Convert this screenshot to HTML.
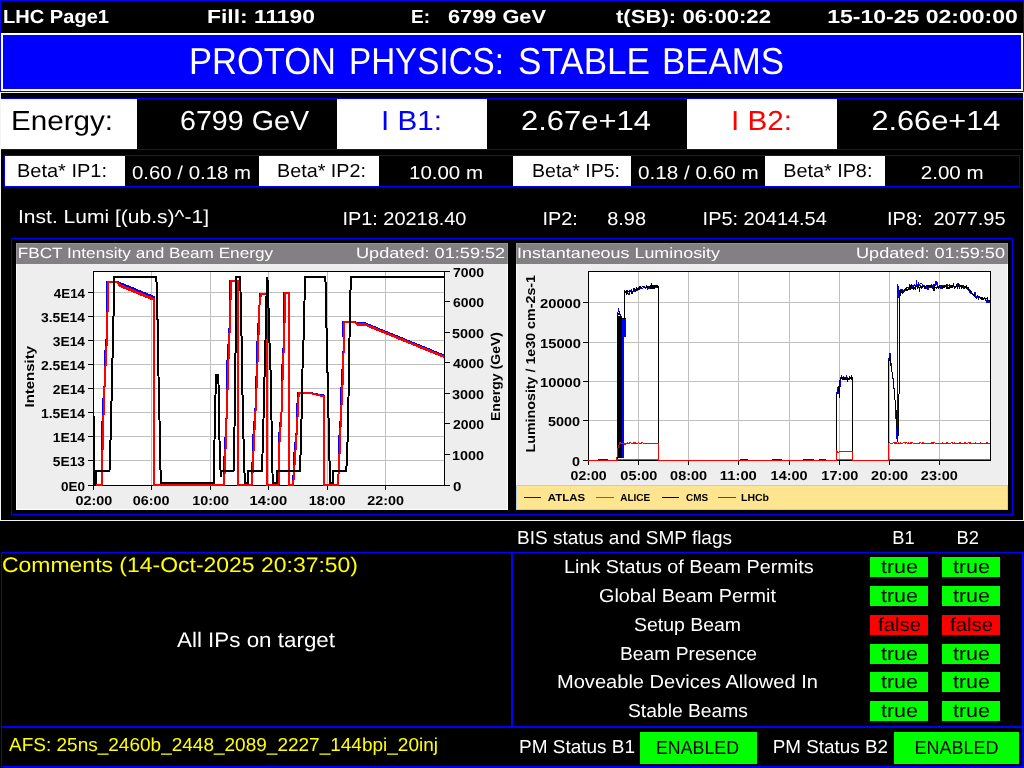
<!DOCTYPE html>
<html><head><meta charset="utf-8"><title>LHC Page1</title>
<style>html,body{margin:0;padding:0;background:#000;width:1024px;height:768px;overflow:hidden;font-family:"Liberation Sans",sans-serif}</style></head>
<body>
<svg width="1024" height="768" viewBox="0 0 1024 768" style="position:absolute;left:0;top:0;display:block">
<filter id="gs" filterUnits="userSpaceOnUse" x="0" y="0" width="1024" height="768"><feOffset dx="0" dy="0"/></filter>
<g shape-rendering="crispEdges">
<rect x="0" y="0" width="1024" height="768" fill="#000"/>
<rect x="0" y="0" width="1024" height="1" fill="#0000ff"/>
<rect x="0" y="91" width="1024" height="1" fill="#0000ff"/>
<rect x="0" y="0" width="1" height="92" fill="#0000ff"/>
<rect x="1023" y="0" width="1" height="92" fill="#0000ff"/>
<rect x="1" y="33" width="1022" height="58" fill="#fff"/>
<rect x="3" y="35" width="1018" height="54" fill="#0000ff"/>
<rect x="0" y="92" width="1024" height="1" fill="#f4f4f4"/>
<rect x="0" y="92" width="1" height="429" fill="#f4f4f4"/>
<rect x="1023" y="92" width="1" height="429" fill="#f4f4f4"/>
<rect x="0" y="520" width="1024" height="1" fill="#f0f0f0"/>
<rect x="1" y="98" width="1022" height="1" fill="#0000ff"/>
<rect x="1" y="149" width="1022" height="1" fill="#0000ff"/>
<rect x="1" y="99" width="136" height="50" fill="#fff"/>
<rect x="337" y="99" width="150" height="50" fill="#fff"/>
<rect x="687" y="99" width="150" height="50" fill="#fff"/>
<rect x="4" y="155" width="1016" height="1" fill="#0000ff"/>
<rect x="4" y="186" width="1016" height="1" fill="#0000ff"/>
<rect x="4" y="155" width="1" height="32" fill="#0000ff"/>
<rect x="1019" y="155" width="1" height="32" fill="#0000ff"/>
<rect x="5" y="156" width="120" height="30" fill="#fff"/>
<rect x="259" y="156" width="120" height="30" fill="#fff"/>
<rect x="513" y="156" width="118" height="30" fill="#fff"/>
<rect x="765" y="156" width="120" height="30" fill="#fff"/>
<rect x="11" y="238" width="1002" height="1" fill="#0000ff"/>
<rect x="11" y="514" width="1002" height="1" fill="#0000ff"/>
<rect x="11" y="238" width="1" height="277" fill="#0000ff"/>
<rect x="1012" y="238" width="1" height="277" fill="#0000ff"/>
<rect x="16" y="243" width="492" height="267" fill="#ffffff"/>
<rect x="17" y="243" width="490" height="266" fill="#eeeeee"/>
<rect x="16" y="243" width="492" height="21" fill="#959395"/>
<rect x="17" y="244" width="490" height="20" fill="#828082"/>
<rect x="516" y="243" width="492" height="267" fill="#ffffff"/>
<rect x="517" y="243" width="490" height="266" fill="#eeeeee"/>
<rect x="516" y="243" width="492" height="21" fill="#959395"/>
<rect x="517" y="244" width="490" height="20" fill="#828082"/>
<rect x="1" y="552" width="511" height="1" fill="#0000ff"/>
<rect x="1" y="726" width="511" height="1" fill="#0000ff"/>
<rect x="1" y="552" width="1" height="175" fill="#0000ff"/>
<rect x="511" y="552" width="1" height="175" fill="#0000ff"/>
<rect x="512" y="552" width="511" height="1" fill="#0000ff"/>
<rect x="512" y="726" width="511" height="1" fill="#0000ff"/>
<rect x="512" y="552" width="1" height="175" fill="#0000ff"/>
<rect x="1022" y="552" width="1" height="175" fill="#0000ff"/>
<rect x="1" y="727" width="1022" height="1" fill="#0000ff"/>
<rect x="1" y="766" width="1022" height="1" fill="#0000ff"/>
<rect x="1" y="727" width="1" height="40" fill="#0000ff"/>
<rect x="1022" y="727" width="1" height="40" fill="#0000ff"/>
<rect x="870" y="557" width="58" height="20" fill="#00ff00"/>
<rect x="942" y="557" width="58" height="20" fill="#00ff00"/>
<rect x="870" y="586" width="58" height="20" fill="#00ff00"/>
<rect x="942" y="586" width="58" height="20" fill="#00ff00"/>
<rect x="870" y="615" width="58" height="20" fill="#ff0000"/>
<rect x="942" y="615" width="58" height="20" fill="#ff0000"/>
<rect x="870" y="644" width="58" height="20" fill="#00ff00"/>
<rect x="942" y="644" width="58" height="20" fill="#00ff00"/>
<rect x="870" y="672" width="58" height="20" fill="#00ff00"/>
<rect x="942" y="672" width="58" height="20" fill="#00ff00"/>
<rect x="870" y="701" width="58" height="20" fill="#00ff00"/>
<rect x="942" y="701" width="58" height="20" fill="#00ff00"/>
<rect x="640" y="732" width="117" height="32" fill="#00ff00"/>
<rect x="894" y="732" width="125" height="32" fill="#00ff00"/>
<rect x="93" y="271" width="352" height="215" fill="#fff"/>
<rect x="151" y="271" width="1" height="215" fill="#c0c0c0"/>
<rect x="210" y="271" width="1" height="215" fill="#c0c0c0"/>
<rect x="268" y="271" width="1" height="215" fill="#c0c0c0"/>
<rect x="327" y="271" width="1" height="215" fill="#c0c0c0"/>
<rect x="385" y="271" width="1" height="215" fill="#c0c0c0"/>
<rect x="93" y="460" width="352" height="1" fill="#c0c0c0"/>
<rect x="93" y="436" width="352" height="1" fill="#c0c0c0"/>
<rect x="93" y="412" width="352" height="1" fill="#c0c0c0"/>
<rect x="93" y="388" width="352" height="1" fill="#c0c0c0"/>
<rect x="93" y="364" width="352" height="1" fill="#c0c0c0"/>
<rect x="93" y="340" width="352" height="1" fill="#c0c0c0"/>
<rect x="93" y="316" width="352" height="1" fill="#c0c0c0"/>
<rect x="93" y="292" width="352" height="1" fill="#c0c0c0"/>
<rect x="588" y="271" width="403" height="190" fill="#fff"/>
<rect x="638" y="271" width="1" height="190" fill="#c0c0c0"/>
<rect x="688" y="271" width="1" height="190" fill="#c0c0c0"/>
<rect x="738" y="271" width="1" height="190" fill="#c0c0c0"/>
<rect x="789" y="271" width="1" height="190" fill="#c0c0c0"/>
<rect x="839" y="271" width="1" height="190" fill="#c0c0c0"/>
<rect x="889" y="271" width="1" height="190" fill="#c0c0c0"/>
<rect x="939" y="271" width="1" height="190" fill="#c0c0c0"/>
<rect x="588" y="420" width="403" height="1" fill="#c0c0c0"/>
<rect x="588" y="381" width="403" height="1" fill="#c0c0c0"/>
<rect x="588" y="342" width="403" height="1" fill="#c0c0c0"/>
<rect x="588" y="302" width="403" height="1" fill="#c0c0c0"/>
<rect x="516" y="485" width="492" height="25" fill="#b8cfe5"/>
<rect x="517" y="486" width="490" height="23" fill="#ffe58f"/>
<rect x="93.5" y="271.5" width="351" height="214" fill="none" stroke="#000" stroke-width="1"/>
<clipPath id="cl"><rect x="93" y="271" width="352" height="215"/></clipPath>
<g clip-path="url(#cl)">
<polyline points="94.0,485.0 101.5,485.0 102.7,408.6 104.6,385.0 105.0,356.0 107.2,332.0 107.0,282.0 117.5,282.0 120.0,283.0 154.0,297.0 154.0,485.0 223.8,485.0 223.8,470.0 226.7,414.0 227.5,360.0 230.0,320.0 230.0,281.0 238.4,281.0 238.4,485.0 252.0,485.0 253.0,440.0 256.0,402.0 257.0,350.0 259.5,305.0 260.0,293.5 267.0,293.5 267.0,485.0 278.5,485.0 278.5,442.0 281.5,412.0 281.5,381.0 284.0,340.0 284.4,292.5 289.2,292.5 289.2,485.0 293.2,485.0 294.2,455.0 297.0,428.0 297.7,393.0 309.8,393.0 324.0,395.5 324.0,485.0 337.7,485.0 339.0,467.0 339.0,442.0 341.0,414.0 341.4,389.0 343.6,350.0 343.4,322.0 354.5,322.0 357.0,323.0 365.5,323.5 444.0,355.5" fill="none" stroke="#0000ff" stroke-width="2" stroke-linejoin="miter"/>
<polyline points="94.0,485.0 101.5,485.0 103.7,408.6 104.6,385.0 106.0,356.0 107.2,332.0 108.0,282.0 117.5,282.0 120.0,286.0 154.0,300.0 154.0,485.0 223.8,485.0 224.8,470.0 226.7,414.0 228.5,360.0 230.0,320.0 231.0,281.0 238.4,281.0 238.4,485.0 252.0,485.0 254.0,440.0 256.0,402.0 258.0,350.0 259.5,305.0 261.0,293.5 267.0,293.5 267.0,485.0 278.5,485.0 279.5,442.0 281.5,412.0 282.5,381.0 284.0,340.0 285.4,292.5 289.2,292.5 289.2,485.0 293.2,485.0 295.2,455.0 297.0,428.0 298.7,393.0 309.8,393.0 324.0,396.5 324.0,485.0 337.7,485.0 339.0,467.0 340.0,442.0 341.0,414.0 342.4,389.0 343.6,350.0 344.4,322.0 354.5,322.0 357.0,324.5 365.5,325.0 444.0,357.0" fill="none" stroke="#ff0000" stroke-width="2" stroke-linejoin="miter"/>
<polyline points="94.0,485.0 101.5,485.0 103.7,408.6 104.6,385.0 106.0,356.0 107.2,332.0 108.0,282.0 117.5,282.0 120.0,285.0 154.0,299.0 154.0,485.0 223.8,485.0 224.8,470.0 226.7,414.0 228.5,360.0 230.0,320.0 231.0,281.0 238.4,281.0 238.4,485.0 252.0,485.0 254.0,440.0 256.0,402.0 258.0,350.0 259.5,305.0 261.0,293.5 267.0,293.5 267.0,485.0 278.5,485.0 279.5,442.0 281.5,412.0 282.5,381.0 284.0,340.0 285.4,292.5 289.2,292.5 289.2,485.0 293.2,485.0 295.2,455.0 297.0,428.0 298.7,393.0 309.8,393.0 324.0,396.5 324.0,485.0 337.7,485.0 339.0,467.0 340.0,442.0 341.0,414.0 342.4,389.0 343.6,350.0 344.4,322.0 354.5,322.0 357.0,324.0 365.5,324.5 444.0,356.5" fill="none" stroke="#ff0000" stroke-width="2" stroke-linejoin="miter"/>
<polyline points="94.0,416.0 94.5,485.0 95.5,485.0 96.0,471.0 109.5,471.0 110.0,458.0 111.0,423.0 112.0,380.0 113.0,337.0 114.0,296.0 114.0,277.0 156.0,277.0 157.0,286.5 157.7,331.4 158.5,376.4 159.5,420.0 160.5,470.0 161.3,483.0 214.0,483.0 214.5,440.0 215.5,395.0 215.8,374.5 218.4,374.5 219.0,423.0 220.3,467.0 221.0,477.0 221.5,471.0 233.5,471.0 234.3,440.0 235.0,395.0 235.8,330.0 236.5,277.0 240.0,277.0 240.8,300.0 241.6,340.0 242.3,385.0 243.3,430.0 244.3,470.0 245.3,483.0 247.8,483.0 247.8,471.0 261.9,471.0 263.0,440.0 264.4,381.0 265.5,340.0 266.3,300.0 267.4,277.0 268.3,300.0 269.2,335.0 270.7,375.0 271.5,420.0 272.7,483.0 276.6,483.0 277.2,471.0 300.0,471.0 301.4,428.0 302.0,383.0 303.4,344.0 304.5,301.0 305.3,277.0 325.4,277.0 326.4,322.6 327.4,367.5 328.4,412.5 329.3,455.0 330.3,483.0 332.7,483.0 333.2,471.0 346.0,471.0 347.0,461.0 348.0,424.0 348.8,381.0 349.5,338.0 350.2,295.0 351.4,277.0 444.0,277.0" fill="none" stroke="#000" stroke-width="2" stroke-linejoin="miter"/>
</g>
<rect x="88" y="485" width="5" height="1" fill="#000"/>
<rect x="88" y="460" width="5" height="1" fill="#000"/>
<rect x="88" y="436" width="5" height="1" fill="#000"/>
<rect x="88" y="412" width="5" height="1" fill="#000"/>
<rect x="88" y="388" width="5" height="1" fill="#000"/>
<rect x="88" y="364" width="5" height="1" fill="#000"/>
<rect x="88" y="340" width="5" height="1" fill="#000"/>
<rect x="88" y="316" width="5" height="1" fill="#000"/>
<rect x="88" y="292" width="5" height="1" fill="#000"/>
<rect x="445" y="485" width="5" height="1" fill="#000"/>
<rect x="445" y="454" width="5" height="1" fill="#000"/>
<rect x="445" y="423" width="5" height="1" fill="#000"/>
<rect x="445" y="393" width="5" height="1" fill="#000"/>
<rect x="445" y="362" width="5" height="1" fill="#000"/>
<rect x="445" y="332" width="5" height="1" fill="#000"/>
<rect x="445" y="301" width="5" height="1" fill="#000"/>
<rect x="445" y="271" width="5" height="1" fill="#000"/>
<rect x="93" y="486" width="1" height="4" fill="#000"/>
<rect x="151" y="486" width="1" height="4" fill="#000"/>
<rect x="210" y="486" width="1" height="4" fill="#000"/>
<rect x="268" y="486" width="1" height="4" fill="#000"/>
<rect x="327" y="486" width="1" height="4" fill="#000"/>
<rect x="385" y="486" width="1" height="4" fill="#000"/>
<rect x="588.5" y="271.5" width="402" height="189" fill="none" stroke="#000" stroke-width="1"/>
<clipPath id="cr"><rect x="588" y="271" width="403" height="190"/></clipPath>
<g clip-path="url(#cr)">
<rect x="622" y="319" width="2" height="139" fill="#0000ff"/>
<rect x="617" y="316" width="5" height="142" fill="#000"/>
<polyline points="598.0,459.0 607.0,459.0 607.0,460.0 617.0,460.0 617.0,318.0 618.5,309.8 620.0,314.0 622.0,318.5 625.5,318.5 625.5,336.6 624.2,336.6 624.2,292.0 626.0,293.0 626.5,291.9 627.0,293.5 627.5,292.6 628.0,292.9 628.5,293.8 629.0,295.1 629.5,293.0 630.0,292.0 630.5,290.7 631.0,290.2 631.5,290.0 632.0,291.7 632.5,291.6 633.0,291.5 633.5,290.7 634.0,290.8 634.5,291.4 635.0,289.7 635.5,290.9 636.0,289.5 636.5,289.7 637.0,288.5 637.5,290.0 638.0,288.7 638.5,288.5 639.0,287.4 639.5,289.4 640.0,289.1 640.5,288.7 641.0,287.5 641.5,288.2 642.0,287.9 642.5,288.5 643.0,288.1 643.5,287.9 644.0,286.5 644.5,287.1 645.0,287.3 645.5,288.4 646.0,287.6 646.5,286.4 647.0,286.0 647.5,288.5 648.0,287.1 648.5,288.3 649.0,288.5 649.5,287.6 650.0,287.3 650.5,287.0 651.0,288.6 651.5,287.3 652.0,288.1 652.5,288.6 653.0,286.9 653.5,288.5 654.0,288.2 654.6,285.9 655.1,288.1 655.6,287.6 656.1,287.7 656.6,286.4 657.1,287.4 657.6,286.9 658.1,288.0 658.6,287.3 658.6,460.0 740.0,460.0 740.0,459.0 747.5,459.0 747.5,460.0 772.0,460.0 772.0,459.0 781.0,459.0 781.0,460.0 803.0,460.0 803.0,459.0 813.0,459.0 813.0,460.0 819.0,460.0 819.0,459.0 825.0,459.0 825.0,460.0 836.0,460.0 836.0,396.0 838.3,386.0 839.3,397.0 840.6,378.0 841.1,376.9 841.6,375.5 842.1,379.3 842.7,378.5 843.2,378.7 843.7,377.1 844.2,377.7 844.7,377.5 845.2,378.8 845.7,379.5 846.2,379.6 846.8,375.3 847.3,378.3 847.8,379.2 848.3,378.7 848.8,378.2 849.3,377.1 849.8,379.2 850.3,378.2 850.9,377.4 851.4,374.9 851.9,379.7 852.4,378.5 852.4,460.0 888.0,460.0 888.0,363.0 890.0,353.2 891.5,368.0 893.5,382.0 895.0,400.0 897.2,442.0 897.8,283.8 899.0,298.0 899.5,295.5 900.0,292.1 900.5,290.0 901.0,289.0 901.5,290.6 902.0,288.7 902.5,291.3 903.0,290.4 903.5,290.2 904.0,291.0 904.5,291.1 905.0,289.4 905.5,290.3 906.0,289.5 906.5,290.2 907.0,287.4 907.5,287.9 908.0,288.0 908.5,288.6 909.0,286.9 909.5,288.4 910.0,286.9 910.5,287.7 911.0,288.4 911.5,287.5 912.0,285.7 912.5,285.7 913.0,286.6 913.5,285.8 914.0,286.0 914.5,285.2 915.0,286.0 915.5,286.6 916.0,285.5 916.5,280.2 917.0,284.6 917.5,285.6 918.0,284.9 918.5,283.3 919.0,285.4 919.5,285.4 920.0,284.0 920.5,283.7 921.0,283.9 921.5,283.8 922.0,283.9 922.5,286.9 923.0,284.7 923.5,285.4 924.0,285.3 924.5,286.4 925.0,287.0 925.5,288.0 926.0,286.1 926.5,285.6 927.0,288.7 927.5,286.0 928.0,290.2 928.5,287.6 929.0,285.4 929.5,287.4 930.0,286.5 930.5,285.2 931.0,285.2 931.5,284.5 932.0,286.9 932.5,285.9 933.0,286.6 933.5,284.7 934.0,284.6 934.5,286.1 935.0,284.5 935.5,285.0 936.0,281.5 936.5,284.0 937.0,284.5 937.5,283.4 938.0,286.3 938.5,287.0 939.0,286.5 939.5,285.8 940.0,287.5 940.5,286.5 941.0,288.6 941.5,286.6 942.0,287.0 942.5,286.3 943.0,285.7 943.5,285.3 944.0,287.6 944.5,287.5 945.0,286.9 945.5,285.2 946.0,285.0 946.5,286.3 947.0,284.5 947.5,286.5 948.0,285.5 948.5,285.7 949.0,285.6 949.5,285.4 950.0,284.6 950.5,285.8 951.0,284.9 951.5,285.2 952.0,285.7 952.5,286.2 953.0,286.9 953.5,285.3 954.0,286.8 954.5,286.7 955.0,287.0 955.5,287.5 956.0,286.8 956.5,285.9 957.0,286.8 957.5,287.7 958.0,283.3 958.5,286.7 959.0,286.2 959.5,285.3 960.0,286.0 960.5,285.5 961.0,285.3 961.5,286.2 962.0,285.4 962.5,286.6 963.0,285.7 963.5,288.0 964.0,287.6 964.5,286.7 965.0,286.7 965.5,287.3 966.0,287.4 966.5,286.7 967.0,287.5 967.5,288.8 968.0,290.1 968.5,289.8 969.0,290.6 969.5,291.7 970.0,292.4 970.5,293.2 971.0,293.8 971.5,293.7 972.0,294.0 972.5,293.4 973.0,294.6 973.5,295.2 974.0,294.7 974.5,296.5 975.0,292.0 975.5,294.9 976.0,296.0 976.5,296.3 977.0,296.6 977.5,297.0 978.0,297.6 978.5,297.0 979.0,298.1 979.5,297.4 980.0,296.8 980.5,298.5 981.0,298.5 981.5,299.3 982.0,299.5 982.5,298.3 983.0,298.5 983.5,298.2 984.0,298.5 984.5,297.7 985.0,299.2 985.5,299.3 986.0,300.3 986.5,300.4 987.0,302.6 987.5,301.1 988.0,301.3 988.5,302.0 989.0,301.1 989.5,301.9 990.0,301.5" fill="none" stroke="#0000ff" stroke-width="1" stroke-linejoin="miter"/>
<polyline points="588.0,460.0 617.5,460.0 617.5,316.0 619.0,313.0 622.0,319.0 624.6,318.5 624.6,291.0 626.0,292.0 626.5,293.3 627.0,290.3 627.5,292.7 628.0,292.0 628.5,291.7 629.0,291.5 629.5,290.9 630.0,291.0 630.5,291.6 631.0,292.2 631.5,290.4 632.0,293.6 632.5,291.7 633.0,291.5 633.5,289.1 634.0,290.0 634.5,288.7 635.0,289.5 635.5,289.3 636.0,290.6 636.5,288.5 637.0,289.8 637.5,288.5 638.0,288.0 638.5,289.0 639.0,289.1 639.5,288.3 640.0,286.5 640.5,287.2 641.0,287.0 641.6,287.8 642.2,286.7 642.8,286.2 643.4,286.6 643.9,286.8 644.4,287.1 644.9,287.6 645.4,287.8 645.9,287.5 646.4,286.0 647.0,287.7 647.5,286.6 648.0,286.3 648.5,286.6 649.0,287.2 649.5,287.5 650.0,286.6 650.5,285.2 651.0,288.5 651.5,283.5 652.0,288.5 652.5,286.2 653.0,287.5 653.5,288.2 654.0,285.3 654.5,289.4 655.0,286.0 655.5,286.6 656.0,284.8 656.5,285.1 657.1,287.1 657.6,284.8 658.1,287.5 658.6,286.6 658.6,460.0 836.5,460.0 836.5,395.4 838.0,392.0 838.7,386.0 839.6,398.0 840.0,380.0 841.0,378.5 841.5,377.6 842.0,378.7 842.5,379.0 843.0,377.5 843.5,378.8 844.0,378.1 844.5,378.1 845.0,379.5 845.5,377.2 846.0,380.1 846.5,378.4 847.0,378.3 847.5,380.2 848.0,378.5 848.5,378.9 849.0,378.5 849.5,376.6 850.0,377.5 850.6,377.6 851.2,379.3 851.8,376.8 852.4,378.5 852.4,460.0 888.4,460.0 888.4,362.6 890.3,356.0 891.0,366.0 893.0,378.0 894.5,395.0 896.0,410.0 897.8,442.0 898.5,420.0 899.1,389.8 899.1,290.4 900.0,296.0 901.0,290.0 901.5,291.7 902.0,290.7 902.5,293.0 903.0,293.3 903.5,291.4 904.0,290.5 904.5,289.5 905.0,290.0 905.5,288.7 906.0,288.3 906.5,288.0 907.0,291.1 907.5,289.3 908.0,289.0 908.5,289.4 909.0,287.7 909.6,283.8 910.1,289.6 910.6,289.4 911.1,284.3 911.7,287.1 912.2,289.1 912.7,286.7 913.2,289.5 913.8,287.0 914.3,287.4 914.8,288.2 915.3,289.9 915.8,285.6 916.3,285.9 916.8,286.5 917.3,287.7 917.8,285.6 918.4,285.5 918.9,287.2 919.4,291.5 919.9,287.4 920.4,286.2 920.9,287.6 921.4,286.7 921.9,288.1 922.4,288.0 923.0,285.9 923.5,286.5 924.0,286.3 924.5,287.9 925.0,286.5 925.5,287.5 926.0,286.1 926.5,285.4 927.0,285.2 927.5,287.8 928.0,287.1 928.5,286.0 929.0,287.2 929.5,286.5 930.0,285.4 930.5,288.1 931.0,285.4 931.5,287.4 932.0,288.0 932.5,287.4 933.0,288.4 933.5,287.0 934.0,291.0 934.5,285.8 935.0,286.8 935.5,287.5 936.0,287.5 936.5,288.4 937.0,287.7 937.5,287.8 938.0,286.1 938.5,286.6 939.0,288.5 939.5,285.4 940.0,287.0 940.5,287.7 941.0,287.4 941.5,285.4 942.0,287.7 942.5,288.2 943.0,285.6 943.5,287.7 944.0,287.6 944.5,285.9 945.0,285.7 945.5,286.6 946.0,287.0 946.5,285.8 947.0,288.7 947.5,287.3 948.0,287.0 948.5,288.1 949.0,287.9 949.5,288.2 950.0,286.2 950.5,288.1 951.0,285.9 951.5,287.7 952.0,285.2 952.5,288.2 953.0,285.5 953.5,283.1 954.0,286.2 954.5,287.7 955.0,286.5 955.5,287.0 956.0,286.7 956.5,285.2 957.0,286.0 957.5,287.6 958.0,286.3 958.6,285.3 959.1,286.3 959.6,287.8 960.1,287.1 960.6,285.9 961.1,285.9 961.6,288.2 962.1,287.8 962.6,286.4 963.1,285.5 963.6,285.8 964.2,286.2 964.7,288.2 965.2,287.4 965.7,286.4 966.2,286.1 966.7,287.6 967.2,287.0 967.8,287.1 968.3,287.3 968.9,289.2 969.4,290.4 970.0,290.0 970.5,291.8 971.0,291.3 971.5,293.3 972.0,293.3 972.5,294.6 973.1,295.4 973.6,294.8 974.1,294.7 974.6,294.7 975.1,295.9 975.6,297.0 976.1,298.4 976.7,298.7 977.2,295.9 977.8,297.0 978.4,298.9 978.9,297.5 979.5,297.0 980.0,298.0 980.5,297.9 981.0,298.9 981.5,298.1 982.0,297.6 982.5,298.2 983.0,299.4 983.5,299.1 984.0,298.8 984.5,298.4 985.0,298.7 985.5,300.0 986.0,298.0 986.5,298.8 987.0,299.0 987.5,298.1 988.0,300.7 988.5,300.7 989.0,299.8 989.5,300.1 990.0,300.7" fill="none" stroke="#000" stroke-width="1" stroke-linejoin="miter"/>
<polyline points="617.0,459.5 658.0,459.5" fill="none" stroke="#ff00ff" stroke-width="1" stroke-linejoin="miter"/>
<polyline points="836.0,459.5 852.0,459.5" fill="none" stroke="#ff00ff" stroke-width="1" stroke-linejoin="miter"/>
<polyline points="888.0,459.5 990.0,459.5" fill="none" stroke="#ff00ff" stroke-width="1" stroke-linejoin="miter"/>
<polyline points="588.0,460.0 616.8,460.0 617.5,450.0 619.6,443.0 620.0,442.0 621.0,443.5 624.0,443.5 625.0,445.0 626.0,443.0 626.5,443.1 627.0,443.2 627.5,443.1 628.0,442.8 628.5,443.3 629.0,443.2 629.5,443.0 630.0,443.1 630.5,442.8 631.0,443.0 631.5,443.2 632.0,443.2 632.5,443.1 633.0,442.8 633.5,442.9 634.0,443.3 634.5,443.0 635.0,443.1 635.5,443.0 636.0,443.2 636.5,443.3 637.0,443.1 637.5,443.0 638.0,443.0 638.5,442.9 639.0,443.1 639.5,443.3 640.0,443.1 640.5,443.3 641.0,444.1 641.5,442.9 642.0,443.1 642.6,442.4 643.1,443.4 643.6,443.1 644.1,443.2 644.6,443.4 645.1,443.2 645.6,443.4 646.1,443.1 646.6,443.5 647.1,443.3 647.6,443.1 648.1,443.4 648.6,443.4 649.1,443.4 649.6,443.4 650.1,443.3 650.6,443.1 651.1,444.2 651.6,443.3 652.1,443.1 652.6,443.1 653.1,443.5 653.6,443.5 654.1,443.4 654.6,443.2 655.1,443.2 655.6,443.3 656.1,443.6 656.6,443.6 657.1,443.4 657.6,443.4 658.1,443.3 658.6,443.4 658.6,460.0 836.5,460.0 836.5,451.0 838.0,452.5 840.0,451.5 840.5,451.4 841.0,451.7 841.5,451.5 842.1,451.3 842.6,451.7 843.1,451.5 843.6,451.7 844.1,451.6 844.6,451.5 845.2,451.4 845.7,451.7 846.2,451.4 846.7,451.6 847.2,451.3 847.8,451.4 848.3,451.5 848.8,451.6 849.3,451.5 849.8,451.7 850.3,451.5 850.9,451.8 851.4,451.8 851.9,451.6 852.4,451.6 852.4,460.0 888.4,460.0 888.4,446.0 889.0,443.0 889.5,442.8 890.0,443.2 890.5,443.1 891.0,443.1 891.5,443.1 892.0,443.1 892.5,443.1 893.0,443.1 893.5,442.8 894.0,443.0 894.5,442.9 895.0,443.8 895.5,442.8 896.0,442.8 896.5,443.0 897.0,443.0 897.5,443.1 898.0,442.9 898.5,443.0 899.0,443.2 899.5,443.2 900.0,443.0 900.5,443.0 901.0,442.9 901.5,443.3 902.0,443.0 902.5,443.0 903.0,443.0 903.5,442.9 904.0,443.0 904.5,442.8 905.0,443.2 905.5,443.0 906.0,443.2 906.5,442.9 907.0,443.1 907.5,443.3 908.0,443.0 908.5,443.0 909.0,442.9 909.5,443.2 910.0,443.4 910.5,442.9 911.0,442.9 911.5,443.0 912.0,443.2 912.5,442.8 913.0,442.9 913.5,443.2 914.0,442.9 914.5,443.3 915.0,443.1 915.5,443.1 916.0,443.2 916.5,443.2 917.0,443.1 917.5,443.0 918.0,443.0 918.5,443.2 919.0,442.8 919.5,443.0 920.0,443.3 920.5,442.8 921.0,443.0 921.5,443.2 922.0,443.1 922.5,443.0 923.0,443.2 923.5,443.0 924.0,442.9 924.5,443.2 925.0,443.0 925.5,443.3 926.0,443.1 926.5,443.1 927.0,442.9 927.5,443.2 928.0,442.9 928.5,443.2 929.0,442.8 929.5,443.3 930.0,442.8 930.5,443.2 931.0,443.2 931.5,443.0 932.0,442.9 932.5,443.0 933.0,442.6 933.5,443.2 934.0,443.1 934.5,443.0 935.0,442.8 935.5,443.2 936.0,443.0 936.5,443.3 937.0,443.0 937.5,443.2 938.0,443.3 938.5,443.0 939.0,443.0 939.5,443.0 940.0,443.3 940.5,443.1 941.0,443.2 941.5,443.2 942.0,442.9 942.5,443.0 943.0,443.1 943.5,443.5 944.0,442.9 944.5,443.2 945.0,442.9 945.5,443.2 946.0,442.9 946.5,443.0 947.0,443.0 947.5,443.0 948.0,442.9 948.5,443.2 949.0,443.1 949.5,443.1 950.0,443.2 950.5,443.1 951.0,442.9 951.5,442.9 952.0,443.1 952.5,442.9 953.0,443.3 953.5,443.1 954.0,442.9 954.5,443.0 955.0,443.1 955.5,443.0 956.0,443.0 956.5,443.0 957.0,443.5 957.5,443.4 958.0,443.4 958.5,443.2 959.0,443.2 959.5,443.0 960.0,442.9 960.5,442.9 961.0,443.4 961.5,443.0 962.0,443.0 962.5,443.3 963.0,443.0 963.5,443.4 964.0,443.1 964.5,442.9 965.0,443.3 965.5,442.9 966.0,443.4 966.5,443.1 967.0,442.9 967.5,443.2 968.0,442.9 968.5,442.9 969.0,442.9 969.5,443.1 970.0,442.6 970.5,443.2 971.0,443.2 971.5,443.1 972.0,443.2 972.5,443.2 973.0,443.5 973.5,443.2 974.0,443.2 974.5,443.4 975.0,443.1 975.5,443.0 976.0,443.1 976.5,443.3 977.0,443.1 977.5,443.0 978.0,443.0 978.5,443.2 979.0,443.0 979.5,443.0 980.0,443.1 980.5,443.0 981.0,443.1 981.5,443.2 982.0,443.3 982.5,443.2 983.0,443.3 983.5,443.4 984.0,443.3 984.5,443.3 985.0,443.0 985.5,443.0 986.0,443.3 986.5,443.0 987.0,442.5 987.5,443.4 988.0,443.1 988.5,443.0 989.0,443.0 989.5,443.1 990.0,443.2" fill="none" stroke="#ff0000" stroke-width="1" stroke-linejoin="miter"/>
</g>
<rect x="583" y="460" width="5" height="1" fill="#000"/>
<rect x="583" y="420" width="5" height="1" fill="#000"/>
<rect x="583" y="381" width="5" height="1" fill="#000"/>
<rect x="583" y="342" width="5" height="1" fill="#000"/>
<rect x="583" y="302" width="5" height="1" fill="#000"/>
<rect x="588" y="461" width="1" height="4" fill="#000"/>
<rect x="638" y="461" width="1" height="4" fill="#000"/>
<rect x="688" y="461" width="1" height="4" fill="#000"/>
<rect x="738" y="461" width="1" height="4" fill="#000"/>
<rect x="789" y="461" width="1" height="4" fill="#000"/>
<rect x="839" y="461" width="1" height="4" fill="#000"/>
<rect x="889" y="461" width="1" height="4" fill="#000"/>
<rect x="939" y="461" width="1" height="4" fill="#000"/>
<rect x="524" y="497" width="17" height="1" fill="#0000ff"/>
<rect x="596" y="497" width="18" height="1" fill="#ff00ff"/>
<rect x="662" y="497" width="17" height="1" fill="#000"/>
<rect x="718" y="497" width="18" height="1" fill="#ff0000"/>
</g>
<g font-family="'Liberation Sans', sans-serif" text-rendering="geometricPrecision" filter="url(#gs)">
<text x="3.00" y="23.00" font-size="19" font-weight="bold" fill="#fff" textLength="106.00" lengthAdjust="spacingAndGlyphs">LHC Page1</text>
<text x="207.00" y="23.00" font-size="19" font-weight="bold" fill="#fff" textLength="108.00" lengthAdjust="spacingAndGlyphs">Fill: 11190</text>
<text x="411.00" y="23.00" font-size="19" font-weight="bold" fill="#fff" textLength="19.00" lengthAdjust="spacingAndGlyphs">E:</text>
<text x="448.00" y="23.00" font-size="19" font-weight="bold" fill="#fff" textLength="98.00" lengthAdjust="spacingAndGlyphs">6799 GeV</text>
<text x="616.00" y="23.00" font-size="19" font-weight="bold" fill="#fff" textLength="155.00" lengthAdjust="spacingAndGlyphs">t(SB): 06:00:22</text>
<text x="827.20" y="23.00" font-size="19" font-weight="bold" fill="#fff" textLength="190.60" lengthAdjust="spacingAndGlyphs">15-10-25 02:00:00</text>
<text x="189.00" y="74.00" font-size="37.5" fill="#fff" textLength="147.00" lengthAdjust="spacingAndGlyphs">PROTON</text>
<text x="349.00" y="74.00" font-size="37.5" fill="#fff" textLength="155.00" lengthAdjust="spacingAndGlyphs">PHYSICS:</text>
<text x="518.00" y="74.00" font-size="37.5" fill="#fff" textLength="132.00" lengthAdjust="spacingAndGlyphs">STABLE</text>
<text x="662.00" y="74.00" font-size="37.5" fill="#fff" textLength="122.00" lengthAdjust="spacingAndGlyphs">BEAMS</text>
<text x="11.00" y="130.00" font-size="27.5" fill="#000" textLength="102.00" lengthAdjust="spacingAndGlyphs">Energy:</text>
<text x="180.00" y="130.00" font-size="27.5" fill="#fff" textLength="129.00" lengthAdjust="spacingAndGlyphs">6799 GeV</text>
<text x="381.00" y="130.00" font-size="27.5" fill="#0000ff" textLength="61.00" lengthAdjust="spacingAndGlyphs">I B1:</text>
<text x="521.00" y="130.00" font-size="27.5" fill="#fff" textLength="130.00" lengthAdjust="spacingAndGlyphs">2.67e+14</text>
<text x="731.00" y="130.00" font-size="27.5" fill="#ff0000" textLength="61.00" lengthAdjust="spacingAndGlyphs">I B2:</text>
<text x="871.40" y="130.00" font-size="27.5" fill="#fff" textLength="129.00" lengthAdjust="spacingAndGlyphs">2.66e+14</text>
<text x="17.00" y="177.00" font-size="18.8" fill="#000" textLength="90.00" lengthAdjust="spacingAndGlyphs">Beta* IP1:</text>
<text x="132.00" y="179.00" font-size="18.8" fill="#fff" textLength="119.00" lengthAdjust="spacingAndGlyphs">0.60 / 0.18 m</text>
<text x="277.00" y="177.00" font-size="18.8" fill="#000" textLength="89.00" lengthAdjust="spacingAndGlyphs">Beta* IP2:</text>
<text x="409.00" y="179.00" font-size="18.8" fill="#fff" textLength="74.00" lengthAdjust="spacingAndGlyphs">10.00 m</text>
<text x="532.00" y="177.00" font-size="18.8" fill="#000" textLength="88.00" lengthAdjust="spacingAndGlyphs">Beta* IP5:</text>
<text x="638.00" y="179.00" font-size="18.8" fill="#fff" textLength="120.60" lengthAdjust="spacingAndGlyphs">0.18 / 0.60 m</text>
<text x="783.20" y="177.00" font-size="18.8" fill="#000" textLength="89.20" lengthAdjust="spacingAndGlyphs">Beta* IP8:</text>
<text x="920.80" y="179.00" font-size="18.8" fill="#fff" textLength="62.80" lengthAdjust="spacingAndGlyphs">2.00 m</text>
<text x="18.00" y="223.00" font-size="18.8" fill="#fff" textLength="191.00" lengthAdjust="spacingAndGlyphs">Inst. Lumi [(ub.s)^-1]</text>
<text x="342.40" y="225.00" font-size="18.8" fill="#fff" textLength="124.00" lengthAdjust="spacingAndGlyphs">IP1: 20218.40</text>
<text x="542.40" y="225.00" font-size="18.8" fill="#fff" textLength="35.40" lengthAdjust="spacingAndGlyphs">IP2:</text>
<text x="607.20" y="225.00" font-size="18.8" fill="#fff" textLength="38.80" lengthAdjust="spacingAndGlyphs">8.98</text>
<text x="702.60" y="225.00" font-size="18.8" fill="#fff" textLength="124.20" lengthAdjust="spacingAndGlyphs">IP5: 20414.54</text>
<text x="887.00" y="225.00" font-size="18.8" fill="#fff" textLength="35.60" lengthAdjust="spacingAndGlyphs">IP8:</text>
<text x="933.40" y="225.00" font-size="18.8" fill="#fff" textLength="72.20" lengthAdjust="spacingAndGlyphs">2077.95</text>
<text x="17.80" y="258.00" font-size="14.8" fill="#fff" textLength="255.20" lengthAdjust="spacingAndGlyphs">FBCT Intensity and Beam Energy</text>
<text x="356.00" y="258.00" font-size="14.8" fill="#fff" textLength="149.20" lengthAdjust="spacingAndGlyphs">Updated: 01:59:52</text>
<text x="517.00" y="258.00" font-size="14.8" fill="#fff" textLength="203.00" lengthAdjust="spacingAndGlyphs">Instantaneous Luminosity</text>
<text x="856.00" y="258.00" font-size="14.8" fill="#fff" textLength="149.00" lengthAdjust="spacingAndGlyphs">Updated: 01:59:50</text>
<text x="61.00" y="491.00" font-size="13" font-weight="bold" fill="#000" textLength="24.00" lengthAdjust="spacingAndGlyphs">0E0</text>
<text x="52.80" y="466.00" font-size="13" font-weight="bold" fill="#000" textLength="32.20" lengthAdjust="spacingAndGlyphs">5E13</text>
<text x="52.80" y="442.00" font-size="13" font-weight="bold" fill="#000" textLength="32.20" lengthAdjust="spacingAndGlyphs">1E14</text>
<text x="41.00" y="418.00" font-size="13" font-weight="bold" fill="#000" textLength="44.00" lengthAdjust="spacingAndGlyphs">1.5E14</text>
<text x="52.80" y="394.00" font-size="13" font-weight="bold" fill="#000" textLength="32.20" lengthAdjust="spacingAndGlyphs">2E14</text>
<text x="41.00" y="370.00" font-size="13" font-weight="bold" fill="#000" textLength="44.00" lengthAdjust="spacingAndGlyphs">2.5E14</text>
<text x="52.80" y="346.00" font-size="13" font-weight="bold" fill="#000" textLength="32.20" lengthAdjust="spacingAndGlyphs">3E14</text>
<text x="41.00" y="322.00" font-size="13" font-weight="bold" fill="#000" textLength="44.00" lengthAdjust="spacingAndGlyphs">3.5E14</text>
<text x="53.80" y="298.00" font-size="13" font-weight="bold" fill="#000" textLength="31.20" lengthAdjust="spacingAndGlyphs">4E14</text>
<text x="453.00" y="491.00" font-size="13" font-weight="bold" fill="#000" textLength="8.40" lengthAdjust="spacingAndGlyphs">0</text>
<text x="452.00" y="460.00" font-size="13" font-weight="bold" fill="#000" textLength="32.00" lengthAdjust="spacingAndGlyphs">1000</text>
<text x="453.00" y="429.00" font-size="13" font-weight="bold" fill="#000" textLength="31.00" lengthAdjust="spacingAndGlyphs">2000</text>
<text x="452.00" y="399.00" font-size="13" font-weight="bold" fill="#000" textLength="32.00" lengthAdjust="spacingAndGlyphs">3000</text>
<text x="453.00" y="368.00" font-size="13" font-weight="bold" fill="#000" textLength="31.00" lengthAdjust="spacingAndGlyphs">4000</text>
<text x="452.00" y="338.00" font-size="13" font-weight="bold" fill="#000" textLength="32.00" lengthAdjust="spacingAndGlyphs">5000</text>
<text x="453.00" y="307.00" font-size="13" font-weight="bold" fill="#000" textLength="31.00" lengthAdjust="spacingAndGlyphs">6000</text>
<text x="453.00" y="277.00" font-size="13" font-weight="bold" fill="#000" textLength="31.00" lengthAdjust="spacingAndGlyphs">7000</text>
<text x="75.50" y="505.00" font-size="13" font-weight="bold" fill="#000" textLength="36.75" lengthAdjust="spacingAndGlyphs">02:00</text>
<text x="132.83" y="505.00" font-size="13" font-weight="bold" fill="#000" textLength="36.75" lengthAdjust="spacingAndGlyphs">06:00</text>
<text x="192.17" y="505.00" font-size="13" font-weight="bold" fill="#000" textLength="36.75" lengthAdjust="spacingAndGlyphs">10:00</text>
<text x="249.50" y="505.00" font-size="13" font-weight="bold" fill="#000" textLength="37.75" lengthAdjust="spacingAndGlyphs">14:00</text>
<text x="308.83" y="505.00" font-size="13" font-weight="bold" fill="#000" textLength="36.75" lengthAdjust="spacingAndGlyphs">18:00</text>
<text x="367.17" y="505.00" font-size="13" font-weight="bold" fill="#000" textLength="36.75" lengthAdjust="spacingAndGlyphs">22:00</text>
<text transform="translate(34.00,407.50) rotate(-90)" x="0" y="0" font-size="13" font-weight="bold" fill="#000" textLength="61.50" lengthAdjust="spacingAndGlyphs">Intensity</text>
<text transform="translate(499.50,421.00) rotate(-90)" x="0" y="0" font-size="13" font-weight="bold" fill="#000" textLength="89.00" lengthAdjust="spacingAndGlyphs">Energy (GeV)</text>
<text x="572.00" y="466.00" font-size="13" font-weight="bold" fill="#000" textLength="8.00" lengthAdjust="spacingAndGlyphs">0</text>
<text x="548.00" y="426.00" font-size="13" font-weight="bold" fill="#000" textLength="32.00" lengthAdjust="spacingAndGlyphs">5000</text>
<text x="540.00" y="387.00" font-size="13" font-weight="bold" fill="#000" textLength="41.00" lengthAdjust="spacingAndGlyphs">10000</text>
<text x="540.00" y="348.00" font-size="13" font-weight="bold" fill="#000" textLength="41.00" lengthAdjust="spacingAndGlyphs">15000</text>
<text x="540.00" y="308.00" font-size="13" font-weight="bold" fill="#000" textLength="41.00" lengthAdjust="spacingAndGlyphs">20000</text>
<text x="570.60" y="480.00" font-size="13" font-weight="bold" fill="#000" textLength="36.00" lengthAdjust="spacingAndGlyphs">02:00</text>
<text x="620.35" y="480.00" font-size="13" font-weight="bold" fill="#000" textLength="37.00" lengthAdjust="spacingAndGlyphs">05:00</text>
<text x="670.10" y="480.00" font-size="13" font-weight="bold" fill="#000" textLength="37.00" lengthAdjust="spacingAndGlyphs">08:00</text>
<text x="719.85" y="480.00" font-size="13" font-weight="bold" fill="#000" textLength="37.00" lengthAdjust="spacingAndGlyphs">11:00</text>
<text x="770.60" y="480.00" font-size="13" font-weight="bold" fill="#000" textLength="37.00" lengthAdjust="spacingAndGlyphs">14:00</text>
<text x="821.35" y="480.00" font-size="13" font-weight="bold" fill="#000" textLength="37.00" lengthAdjust="spacingAndGlyphs">17:00</text>
<text x="871.10" y="480.00" font-size="13" font-weight="bold" fill="#000" textLength="37.00" lengthAdjust="spacingAndGlyphs">20:00</text>
<text x="920.85" y="480.00" font-size="13" font-weight="bold" fill="#000" textLength="37.00" lengthAdjust="spacingAndGlyphs">23:00</text>
<text transform="translate(534.50,452.50) rotate(-90)" x="0" y="0" font-size="13" font-weight="bold" fill="#000" textLength="177.50" lengthAdjust="spacingAndGlyphs">Luminosity / 1e30 cm-2s-1</text>
<text x="547.80" y="501.00" font-size="10.2" font-weight="bold" fill="#000" textLength="37.20" lengthAdjust="spacingAndGlyphs">ATLAS</text>
<text x="620.20" y="501.00" font-size="10.2" font-weight="bold" fill="#000" textLength="30.00" lengthAdjust="spacingAndGlyphs">ALICE</text>
<text x="686.00" y="501.00" font-size="10.2" font-weight="bold" fill="#000" textLength="22.00" lengthAdjust="spacingAndGlyphs">CMS</text>
<text x="741.00" y="501.00" font-size="10.2" font-weight="bold" fill="#000" textLength="28.00" lengthAdjust="spacingAndGlyphs">LHCb</text>
<text x="517.00" y="544.00" font-size="18.8" fill="#fff" textLength="215.00" lengthAdjust="spacingAndGlyphs">BIS status and SMP flags</text>
<text x="892.20" y="544.00" font-size="18.8" fill="#fff" textLength="22.40" lengthAdjust="spacingAndGlyphs">B1</text>
<text x="956.60" y="544.00" font-size="18.8" fill="#fff" textLength="22.40" lengthAdjust="spacingAndGlyphs">B2</text>
<text x="564.00" y="573.00" font-size="18.8" fill="#fff" textLength="249.60" lengthAdjust="spacingAndGlyphs">Link Status of Beam Permits</text>
<text x="599.00" y="602.00" font-size="18.8" fill="#fff" textLength="177.00" lengthAdjust="spacingAndGlyphs">Global Beam Permit</text>
<text x="634.00" y="631.00" font-size="18.8" fill="#fff" textLength="107.00" lengthAdjust="spacingAndGlyphs">Setup Beam</text>
<text x="620.00" y="660.00" font-size="18.8" fill="#fff" textLength="137.00" lengthAdjust="spacingAndGlyphs">Beam Presence</text>
<text x="557.00" y="688.00" font-size="18.8" fill="#fff" textLength="261.00" lengthAdjust="spacingAndGlyphs">Moveable Devices Allowed In</text>
<text x="628.00" y="717.00" font-size="18.8" fill="#fff" textLength="120.00" lengthAdjust="spacingAndGlyphs">Stable Beams</text>
<text x="881.00" y="573.00" font-size="18.8" fill="#000" textLength="37.00" lengthAdjust="spacingAndGlyphs">true</text>
<text x="953.00" y="573.00" font-size="18.8" fill="#000" textLength="37.00" lengthAdjust="spacingAndGlyphs">true</text>
<text x="881.00" y="602.00" font-size="18.8" fill="#000" textLength="37.00" lengthAdjust="spacingAndGlyphs">true</text>
<text x="953.00" y="602.00" font-size="18.8" fill="#000" textLength="37.00" lengthAdjust="spacingAndGlyphs">true</text>
<text x="878.00" y="631.00" font-size="18.8" fill="#000" textLength="43.00" lengthAdjust="spacingAndGlyphs">false</text>
<text x="950.00" y="631.00" font-size="18.8" fill="#000" textLength="43.00" lengthAdjust="spacingAndGlyphs">false</text>
<text x="881.00" y="660.00" font-size="18.8" fill="#000" textLength="37.00" lengthAdjust="spacingAndGlyphs">true</text>
<text x="953.00" y="660.00" font-size="18.8" fill="#000" textLength="37.00" lengthAdjust="spacingAndGlyphs">true</text>
<text x="881.00" y="688.00" font-size="18.8" fill="#000" textLength="37.00" lengthAdjust="spacingAndGlyphs">true</text>
<text x="953.00" y="688.00" font-size="18.8" fill="#000" textLength="37.00" lengthAdjust="spacingAndGlyphs">true</text>
<text x="881.00" y="717.00" font-size="18.8" fill="#000" textLength="37.00" lengthAdjust="spacingAndGlyphs">true</text>
<text x="953.00" y="717.00" font-size="18.8" fill="#000" textLength="37.00" lengthAdjust="spacingAndGlyphs">true</text>
<text x="2.00" y="572.00" font-size="21" fill="#ffff00" textLength="356.00" lengthAdjust="spacingAndGlyphs">Comments (14-Oct-2025 20:37:50)</text>
<text x="177.00" y="647.00" font-size="21" fill="#fff" textLength="158.00" lengthAdjust="spacingAndGlyphs">All IPs on target</text>
<text x="9.00" y="751.00" font-size="18.8" fill="#ffff00" textLength="429.00" lengthAdjust="spacingAndGlyphs">AFS: 25ns_2460b_2448_2089_2227_144bpi_20inj</text>
<text x="519.00" y="753.00" font-size="18.8" fill="#fff" textLength="116.00" lengthAdjust="spacingAndGlyphs">PM Status B1</text>
<text x="656.00" y="754.00" font-size="18.8" fill="#000" textLength="83.00" lengthAdjust="spacingAndGlyphs">ENABLED</text>
<text x="772.80" y="753.00" font-size="18.8" fill="#fff" textLength="115.20" lengthAdjust="spacingAndGlyphs">PM Status B2</text>
<text x="914.40" y="754.00" font-size="18.8" fill="#000" textLength="84.00" lengthAdjust="spacingAndGlyphs">ENABLED</text>
</g>
</svg>
</body></html>
